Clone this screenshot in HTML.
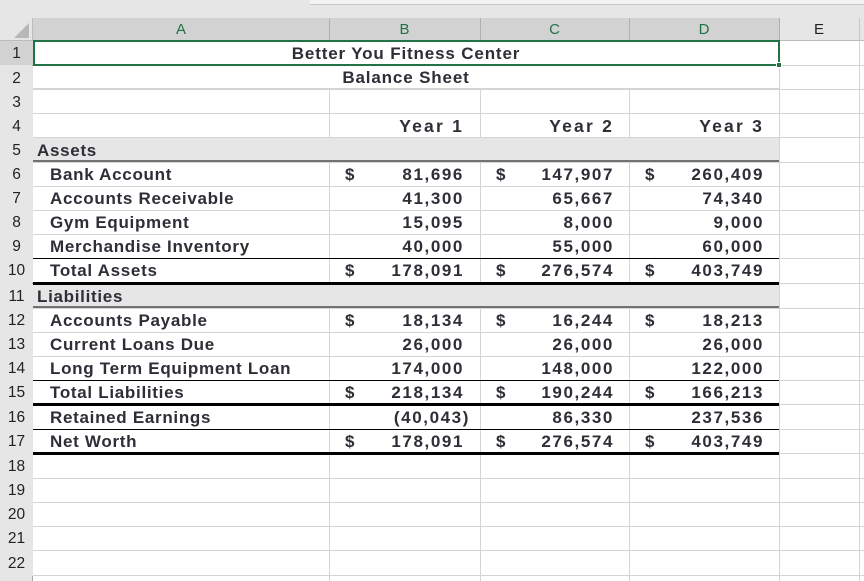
<!DOCTYPE html>
<html><head><meta charset="utf-8"><style>
*{margin:0;padding:0;box-sizing:border-box}
body{width:864px;height:581px;overflow:hidden;background:#fff;position:relative;font-family:"Liberation Sans",Arial,sans-serif}
div{position:absolute}
.h{height:1px;left:33px;right:0;background:#d4d4d4}
.v{width:1px;top:41px;bottom:0;background:#d4d4d4}
.t{font-weight:bold;font-size:17px;color:#2e2e36;white-space:nowrap;letter-spacing:0.7px;padding-top:2px}
.n{text-align:right;letter-spacing:1.6px;margin-right:-1.6px}
.rh{left:0;width:33px;font-size:15.5px;color:#222;text-align:center;background:#e6e6e6;padding-top:1px}
</style></head><body>
<div style="left:0;top:0;width:864px;height:18px;background:#e6e6e6"></div>
<div style="left:310px;top:0;width:554px;height:5px;background:#f3f3f3;border-bottom:1px solid #c8c8c8"></div>
<div style="left:0;top:18px;width:33px;height:23px;background:#e6e6e6;border-right:1px solid #bbb;border-bottom:1px solid #bbb"></div>
<div style="left:14px;top:23px;width:0;height:0;border-left:15px solid transparent;border-bottom:15px solid #b8b8b8"></div>
<div style="left:33px;top:18px;width:746px;height:23px;background:#d2d2d2;border-bottom:1px solid #9a9a9a"></div>
<div style="left:779px;top:18px;width:85px;height:23px;background:#e6e6e6;border-bottom:1px solid #bbb"></div>
<div style="left:329px;top:18px;width:1px;height:23px;background:#b0b0b0"></div>
<div style="left:480px;top:18px;width:1px;height:23px;background:#b0b0b0"></div>
<div style="left:629px;top:18px;width:1px;height:23px;background:#b0b0b0"></div>
<div style="left:779px;top:18px;width:1px;height:23px;background:#b0b0b0"></div>
<div style="left:859px;top:18px;width:1px;height:23px;background:#c8c8c8"></div>
<div style="left:33px;top:18px;width:296px;line-height:23px;text-align:center;font-size:15px;color:#217346">A</div>
<div style="left:329px;top:18px;width:151px;line-height:23px;text-align:center;font-size:15px;color:#217346">B</div>
<div style="left:480px;top:18px;width:149px;line-height:23px;text-align:center;font-size:15px;color:#217346">C</div>
<div style="left:629px;top:18px;width:150px;line-height:23px;text-align:center;font-size:15px;color:#217346">D</div>
<div style="left:779px;top:18px;width:80px;line-height:23px;text-align:center;font-size:15px;color:#222">E</div>
<div style="left:0;top:41px;width:33px;height:540px;background:#e6e6e6;border-right:1px solid #a8a8a8"></div>
<div class="h" style="top:65px"></div><div class="h" style="top:89px"></div><div class="h" style="top:113px"></div>
<div class="h" style="top:137px"></div><div class="h" style="top:162px"></div><div class="h" style="top:186px"></div>
<div class="h" style="top:210px"></div><div class="h" style="top:234px"></div><div class="h" style="top:258px"></div>
<div class="h" style="top:283px"></div><div class="h" style="top:308px"></div><div class="h" style="top:332px"></div>
<div class="h" style="top:356px"></div><div class="h" style="top:380px"></div><div class="h" style="top:404px"></div>
<div class="h" style="top:429px"></div><div class="h" style="top:453px"></div><div class="h" style="top:478px"></div>
<div class="h" style="top:502px"></div><div class="h" style="top:526px"></div><div class="h" style="top:550px"></div>
<div class="h" style="top:575px"></div>
<div class="v" style="left:329px"></div><div class="v" style="left:480px"></div><div class="v" style="left:629px"></div>
<div class="v" style="left:779px"></div><div class="v" style="left:859px"></div>
<div style="left:33px;top:41px;width:746px;height:48px;background:#fff;border-bottom:1px solid #d4d4d4"></div>
<div style="left:33px;top:65px;width:746px;height:1px;background:#d4d4d4"></div>
<div style="left:33px;top:138px;width:746px;height:24px;background:#e7e6e6;border-bottom:2px solid #767171"></div>
<div style="left:33px;top:284px;width:746px;height:24px;background:#e7e6e6;border-bottom:2px solid #767171"></div>
<div style="left:33px;top:258px;width:746px;height:1px;background:#000"></div>
<div style="left:33px;top:282px;width:746px;height:3px;background:#000"></div>
<div style="left:33px;top:380px;width:746px;height:1px;background:#000"></div>
<div style="left:33px;top:403px;width:746px;height:3px;background:#000"></div>
<div style="left:33px;top:429px;width:746px;height:1px;background:#000"></div>
<div style="left:33px;top:452px;width:746px;height:3px;background:#000"></div>
<div style="left:33px;top:40px;width:747px;height:26px;border:2px solid #217346"></div>
<div style="left:776px;top:62px;width:6px;height:6px;background:#217346;border:1px solid #fff"></div>
<div class="rh" style="top:41px;height:24px;line-height:24px;background:#d2d2d2">1</div>
<div class="rh" style="top:66px;line-height:24px">2</div>
<div class="rh" style="top:90px;line-height:24px">3</div>
<div class="rh" style="top:114px;line-height:24px">4</div>
<div class="rh" style="top:138px;line-height:24px">5</div>
<div class="rh" style="top:162px;line-height:24px">6</div>
<div class="rh" style="top:186px;line-height:24px">7</div>
<div class="rh" style="top:210px;line-height:24px">8</div>
<div class="rh" style="top:234px;line-height:24px">9</div>
<div class="rh" style="top:258px;line-height:24px">10</div>
<div class="rh" style="top:284px;line-height:24px">11</div>
<div class="rh" style="top:308px;line-height:24px">12</div>
<div class="rh" style="top:332px;line-height:24px">13</div>
<div class="rh" style="top:356px;line-height:24px">14</div>
<div class="rh" style="top:380px;line-height:24px">15</div>
<div class="rh" style="top:405px;line-height:24px">16</div>
<div class="rh" style="top:429px;line-height:24px">17</div>
<div class="rh" style="top:454px;line-height:24px">18</div>
<div class="rh" style="top:478px;line-height:24px">19</div>
<div class="rh" style="top:502px;line-height:24px">20</div>
<div class="rh" style="top:526px;line-height:24px">21</div>
<div class="rh" style="top:551px;line-height:24px">22</div>
<div class="t" style="left:33px;width:746px;top:41px;line-height:22px;text-align:center;letter-spacing:0.85px">Better You Fitness Center</div>
<div class="t" style="left:33px;width:746px;top:65px;line-height:22px;text-align:center;letter-spacing:0.85px">Balance Sheet</div>
<div class="t n" style="left:329px;width:135px;top:113px;line-height:23px;font-size:17.5px;letter-spacing:2.2px;margin:0">Year 1</div>
<div class="t n" style="left:480px;width:134px;top:113px;line-height:23px;font-size:17.5px;letter-spacing:2.2px;margin:0">Year 2</div>
<div class="t n" style="left:629px;width:135px;top:113px;line-height:23px;font-size:17.5px;letter-spacing:2.2px;margin:0">Year 3</div>
<div class="t" style="left:37px;top:138px;line-height:22px">Assets</div>
<div class="t" style="left:50px;top:162px;line-height:22px">Bank Account</div>
<div class="t" style="left:50px;top:186px;line-height:22px">Accounts Receivable</div>
<div class="t" style="left:50px;top:210px;line-height:22px">Gym Equipment</div>
<div class="t" style="left:50px;top:234px;line-height:22px">Merchandise Inventory</div>
<div class="t" style="left:50px;top:258px;line-height:22px">Total Assets</div>
<div class="t" style="left:37px;top:284px;line-height:22px">Liabilities</div>
<div class="t" style="left:50px;top:308px;line-height:22px">Accounts Payable</div>
<div class="t" style="left:50px;top:332px;line-height:22px">Current Loans Due</div>
<div class="t" style="left:50px;top:356px;line-height:22px">Long Term Equipment Loan</div>
<div class="t" style="left:50px;top:380px;line-height:22px">Total Liabilities</div>
<div class="t" style="left:50px;top:405px;line-height:22px">Retained Earnings</div>
<div class="t" style="left:50px;top:429px;line-height:22px">Net Worth</div>
<div class="t" style="left:345px;top:162px;line-height:22px">$</div><div class="t" style="left:496px;top:162px;line-height:22px">$</div><div class="t" style="left:645px;top:162px;line-height:22px">$</div>
<div class="t" style="left:345px;top:258px;line-height:22px">$</div><div class="t" style="left:496px;top:258px;line-height:22px">$</div><div class="t" style="left:645px;top:258px;line-height:22px">$</div>
<div class="t" style="left:345px;top:308px;line-height:22px">$</div><div class="t" style="left:496px;top:308px;line-height:22px">$</div><div class="t" style="left:645px;top:308px;line-height:22px">$</div>
<div class="t" style="left:345px;top:380px;line-height:22px">$</div><div class="t" style="left:496px;top:380px;line-height:22px">$</div><div class="t" style="left:645px;top:380px;line-height:22px">$</div>
<div class="t" style="left:345px;top:429px;line-height:22px">$</div><div class="t" style="left:496px;top:429px;line-height:22px">$</div><div class="t" style="left:645px;top:429px;line-height:22px">$</div>
<div class="t n" style="left:329px;width:135px;top:162px;line-height:22px">81,696</div>
<div class="t n" style="left:329px;width:135px;top:186px;line-height:22px">41,300</div>
<div class="t n" style="left:329px;width:135px;top:210px;line-height:22px">15,095</div>
<div class="t n" style="left:329px;width:135px;top:234px;line-height:22px">40,000</div>
<div class="t n" style="left:329px;width:135px;top:258px;line-height:22px">178,091</div>
<div class="t n" style="left:329px;width:135px;top:308px;line-height:22px">18,134</div>
<div class="t n" style="left:329px;width:135px;top:332px;line-height:22px">26,000</div>
<div class="t n" style="left:329px;width:135px;top:356px;line-height:22px">174,000</div>
<div class="t n" style="left:329px;width:135px;top:380px;line-height:22px">218,134</div>
<div class="t n" style="left:329px;width:141px;top:405px;line-height:22px">(40,043)</div>
<div class="t n" style="left:329px;width:135px;top:429px;line-height:22px">178,091</div>
<div class="t n" style="left:480px;width:134px;top:162px;line-height:22px">147,907</div>
<div class="t n" style="left:480px;width:134px;top:186px;line-height:22px">65,667</div>
<div class="t n" style="left:480px;width:134px;top:210px;line-height:22px">8,000</div>
<div class="t n" style="left:480px;width:134px;top:234px;line-height:22px">55,000</div>
<div class="t n" style="left:480px;width:134px;top:258px;line-height:22px">276,574</div>
<div class="t n" style="left:480px;width:134px;top:308px;line-height:22px">16,244</div>
<div class="t n" style="left:480px;width:134px;top:332px;line-height:22px">26,000</div>
<div class="t n" style="left:480px;width:134px;top:356px;line-height:22px">148,000</div>
<div class="t n" style="left:480px;width:134px;top:380px;line-height:22px">190,244</div>
<div class="t n" style="left:480px;width:134px;top:405px;line-height:22px">86,330</div>
<div class="t n" style="left:480px;width:134px;top:429px;line-height:22px">276,574</div>
<div class="t n" style="left:629px;width:135px;top:162px;line-height:22px">260,409</div>
<div class="t n" style="left:629px;width:135px;top:186px;line-height:22px">74,340</div>
<div class="t n" style="left:629px;width:135px;top:210px;line-height:22px">9,000</div>
<div class="t n" style="left:629px;width:135px;top:234px;line-height:22px">60,000</div>
<div class="t n" style="left:629px;width:135px;top:258px;line-height:22px">403,749</div>
<div class="t n" style="left:629px;width:135px;top:308px;line-height:22px">18,213</div>
<div class="t n" style="left:629px;width:135px;top:332px;line-height:22px">26,000</div>
<div class="t n" style="left:629px;width:135px;top:356px;line-height:22px">122,000</div>
<div class="t n" style="left:629px;width:135px;top:380px;line-height:22px">166,213</div>
<div class="t n" style="left:629px;width:135px;top:405px;line-height:22px">237,536</div>
<div class="t n" style="left:629px;width:135px;top:429px;line-height:22px">403,749</div>
</body></html>
